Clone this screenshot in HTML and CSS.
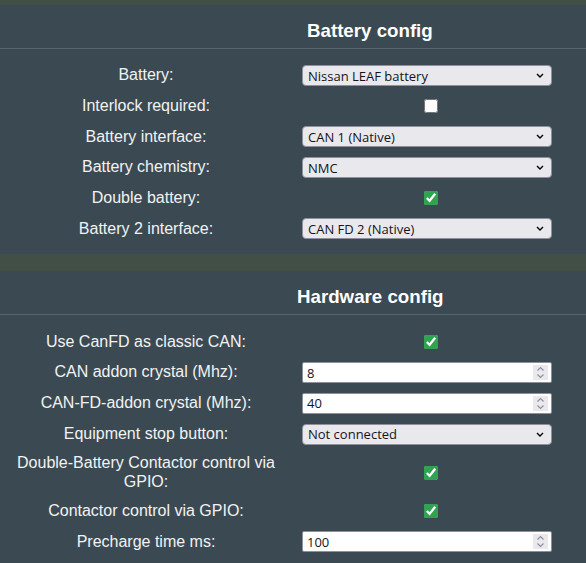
FILE: index.html
```html
<!DOCTYPE html>
<html>
<head>
<meta charset="utf-8">
<link rel="stylesheet" href="styles.css">
</head>
<body>
<div class="page">
  <section class="card">
    <h3 class="card-title title-battery">Battery config</h3>
    <div class="form">
      <label class="lbl">Battery:</label>
      <div class="ctl"><select class="sel"><option>Nissan LEAF battery</option></select></div>
      <label class="lbl">Interlock required:</label>
      <div class="ctl"><input class="chk" type="checkbox"></div>
      <label class="lbl">Battery interface:</label>
      <div class="ctl"><select class="sel"><option>CAN 1 (Native)</option></select></div>
      <label class="lbl">Battery chemistry:</label>
      <div class="ctl"><select class="sel"><option>NMC</option></select></div>
      <label class="lbl">Double battery:</label>
      <div class="ctl"><input class="chk" type="checkbox" checked></div>
      <label class="lbl">Battery 2 interface:</label>
      <div class="ctl"><select class="sel"><option>CAN FD 2 (Native)</option></select></div>
    </div>
  </section>
  <section class="card">
    <h3 class="card-title title-hardware">Hardware config</h3>
    <div class="form">
      <label class="lbl">Use CanFD as classic CAN:</label>
      <div class="ctl"><input class="chk" type="checkbox" checked></div>
      <label class="lbl">CAN addon crystal (Mhz):</label>
      <div class="ctl"><div class="num"><input class="num-input" type="text" value="8"><span class="spin"><svg width="9" height="13" viewBox="0 0 9 13"><path d="M1.5 4.5l3-3 3 3M1.5 8.5l3 3 3-3" fill="none" stroke="#8f8f9d" stroke-width="1.2"/></svg></span></div></div>
      <label class="lbl">CAN-FD-addon crystal (Mhz):</label>
      <div class="ctl"><div class="num"><input class="num-input" type="text" value="40"><span class="spin"><svg width="9" height="13" viewBox="0 0 9 13"><path d="M1.5 4.5l3-3 3 3M1.5 8.5l3 3 3-3" fill="none" stroke="#8f8f9d" stroke-width="1.2"/></svg></span></div></div>
      <label class="lbl">Equipment stop button:</label>
      <div class="ctl"><select class="sel"><option>Not connected</option></select></div>
      <label class="lbl">Double-Battery Contactor control via GPIO:</label>
      <div class="ctl"><input class="chk" type="checkbox" checked></div>
      <label class="lbl">Contactor control via GPIO:</label>
      <div class="ctl"><input class="chk" type="checkbox" checked></div>
      <label class="lbl">Precharge time ms:</label>
      <div class="ctl"><div class="num"><input class="num-input" type="text" value="100"><span class="spin"><svg width="9" height="13" viewBox="0 0 9 13"><path d="M1.5 4.5l3-3 3 3M1.5 8.5l3 3 3-3" fill="none" stroke="#8f8f9d" stroke-width="1.2"/></svg></span></div></div>
    </div>
  </section>
</div>
</body>
</html>
```
FILE: styles.css
```css
html, body {
  margin: 0;
  padding: 0;
}
body {
  background: #424f47;
  font-family: "Liberation Sans", Arial, sans-serif;
  color: #f2f2f2;
}
.page {
  padding-top: 5px;
  display: flex;
  flex-direction: column;
  gap: 17px;
}
.card {
  background: #3b4a52;
  padding-bottom: 15px;
}
.card-title {
  margin: 0;
  font-size: 18.72px;
  font-weight: bold;
  color: #ffffff;
  height: 44px;
  box-sizing: border-box;
  padding-top: 14.5px;
  line-height: 21.5px;
  border-bottom: 1px solid #56656c;
}
.title-battery { padding-left: 307px; }
.title-hardware { padding-left: 297px; }
.form {
  display: grid;
  grid-template-columns: 292px 250px;
  column-gap: 10px;
  row-gap: 9.7px;
  padding-top: 16px;
  align-items: center;
}
.lbl {
  font-size: 16px;
  line-height: 18.4px;
  text-align: center;
  color: #f2f2f2;
  padding: 0 8px;
}
.ctl {
  height: 21px;
  display: flex;
  align-items: center;
}
.sel {
  appearance: none;
  -webkit-appearance: none;
  width: 250px;
  height: 21px;
  box-sizing: border-box;
  margin: 0;
  padding: 0 20px 0 5px;
  border: 1px solid #8f8f9d;
  border-radius: 4px;
  background: #e9e9ed url("data:image/svg+xml;utf8,<svg xmlns='http://www.w3.org/2000/svg' width='8' height='5' viewBox='0 0 8 5'><path d='M1 1l3 3 3-3' fill='none' stroke='black' stroke-width='1.4'/></svg>") no-repeat right 7px center;
  font-family: "Open Sans", "Noto Sans", sans-serif;
  font-size: 13px;
  color: #15141a;
}
.chk {
  margin: 0 0 0 122px;
  width: 14px;
  height: 14px;
  accent-color: #30a352;
}
.num {
  width: 250px;
  height: 21px;
  box-sizing: border-box;
  display: flex;
  align-items: center;
  background: #ffffff;
  border: 1px solid #8f8f9d;
  border-radius: 2px;
}
.num-input {
  flex: 1;
  min-width: 0;
  border: none;
  outline: none;
  background: transparent;
  padding: 0 0 0 4px;
  margin: 0;
  font-family: "Open Sans", "Noto Sans", sans-serif;
  font-size: 13px;
  color: #15141a;
}
.spin {
  width: 15px;
  height: 15px;
  margin-right: 3px;
  background: #e9e9ed;
  display: flex;
  align-items: center;
  justify-content: center;
}
.spin svg { display: block; }
```
